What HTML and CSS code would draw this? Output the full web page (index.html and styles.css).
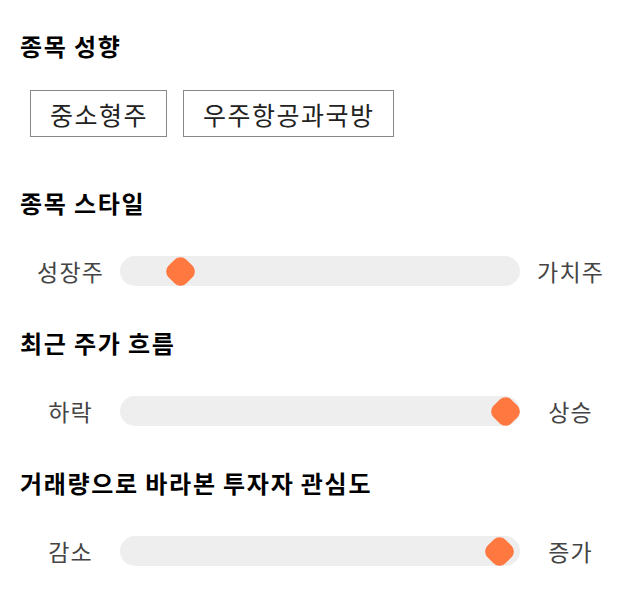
FILE: index.html
```html
<!DOCTYPE html>
<html lang="ko">
<head>
<meta charset="utf-8">
<title>종목 성향</title>
<link rel="stylesheet" href="styles.css">
</head>
<body>
<main class="page">
  <section class="section section-tags">
    <h2 class="title">종목 성향</h2>
    <div class="tags">
      <span class="tag">중소형주</span>
      <span class="tag">우주항공과국방</span>
    </div>
  </section>

  <section class="section">
    <h2 class="title">종목 스타일</h2>
    <div class="slider-row">
      <span class="label">성장주</span>
      <div class="track"><span class="thumb" style="left: calc(0.125 * (100% - 29px));"></span></div>
      <span class="label">가치주</span>
    </div>
  </section>

  <section class="section">
    <h2 class="title">최근 주가 흐름</h2>
    <div class="slider-row">
      <span class="label">하락</span>
      <div class="track"><span class="thumb" style="left: calc(1 * (100% - 29px));"></span></div>
      <span class="label">상승</span>
    </div>
  </section>

  <section class="section">
    <h2 class="title">거래량으로 바라본 투자자 관심도</h2>
    <div class="slider-row">
      <span class="label">감소</span>
      <div class="track"><span class="thumb" style="left: calc(0.984 * (100% - 29px));"></span></div>
      <span class="label">증가</span>
    </div>
  </section>
</main>
</body>
</html>
```

FILE: styles.css
```css
* { box-sizing: border-box; }

html, body {
  margin: 0;
  padding: 0;
  background: #ffffff;
}

body {
  font-family: "Noto Sans CJK KR", "Noto Sans", sans-serif;
  color: #000;
}

.page {
  width: 640px;
  padding: 31px 20px 0;
  display: flex;
  flex-direction: column;
  gap: 42px;
}

.section {
  display: flex;
  flex-direction: column;
  gap: 38px;
}

.section-tags {
  gap: 29px;
  padding-bottom: 9px;
}

.title {
  margin: 0;
  font-size: 24px;
  line-height: 30px;
  font-weight: 700;
  color: #000;
  letter-spacing: 1.7px;
  word-spacing: -2px;
}

.tags {
  display: flex;
  gap: 16px;
  padding-left: 10px;
}

.tag {
  display: inline-flex;
  align-items: center;
  justify-content: center;
  height: 47px;
  padding: 0 18px 0 19px;
  border: 1px solid #888;
  font-size: 25px;
  letter-spacing: 1.5px;
  color: #222;
}

.slider-row {
  display: grid;
  grid-template-columns: 100px 1fr 100px;
  align-items: center;
  height: 30px;
}

.label {
  text-align: center;
  font-size: 23px;
  letter-spacing: 1.2px;
  padding-left: 1.2px;
  color: #444;
  line-height: 30px;
}

.track {
  position: relative;
  height: 30px;
  border-radius: 15px;
  background: #eeeeee;
}

.thumb {
  position: absolute;
  top: 0;
  width: 29px;
  height: 30px;
  display: flex;
  align-items: center;
  justify-content: center;
}

.thumb::before {
  content: "";
  flex: none;
  width: 25px;
  height: 25px;
  background: #ff7840;
  border-radius: 8px;
  transform: rotate(45deg);
}
```
